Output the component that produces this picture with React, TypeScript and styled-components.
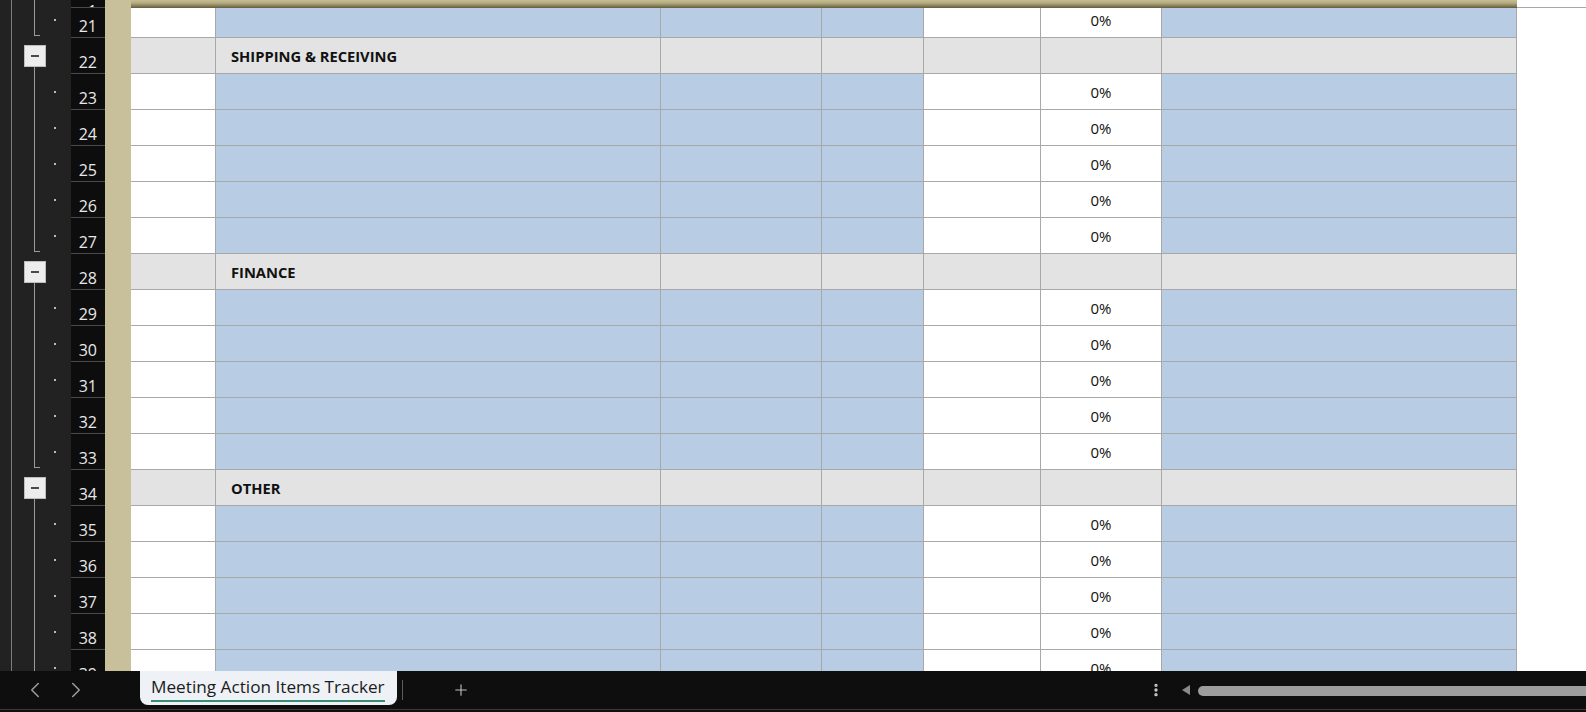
import React from 'react';
import styled, { createGlobalStyle } from 'styled-components';
import { ChevronLeft, ChevronRight, Plus, EllipsisVertical } from 'lucide-react';

const GlobalStyle = createGlobalStyle`
  html, body {
    margin: 0;
    padding: 0;
    background: #ffffff;
    overflow: hidden;
  }
  body {
    font-family: 'Open Sans', 'Noto Sans', sans-serif;
  }
`;

// widths of columns A..G
const COLS = [85, 445, 161, 102, 117, 121, 355];
const BLUE_COLS = [1, 2, 3, 6];
const GRID = '#a8a8a8';

type Outline = 'line' | 'end' | 'button';

interface IRow {
  num: number;
  group?: string;
  outline: Outline;
}

const rows: IRow[] = [
  { num: 21, outline: 'end' },
  { num: 22, outline: 'button', group: 'SHIPPING & RECEIVING' },
  { num: 23, outline: 'line' },
  { num: 24, outline: 'line' },
  { num: 25, outline: 'line' },
  { num: 26, outline: 'line' },
  { num: 27, outline: 'end' },
  { num: 28, outline: 'button', group: 'FINANCE' },
  { num: 29, outline: 'line' },
  { num: 30, outline: 'line' },
  { num: 31, outline: 'line' },
  { num: 32, outline: 'line' },
  { num: 33, outline: 'end' },
  { num: 34, outline: 'button', group: 'OTHER' },
  { num: 35, outline: 'line' },
  { num: 36, outline: 'line' },
  { num: 37, outline: 'line' },
  { num: 38, outline: 'line' },
  { num: 39, outline: 'line' },
];

const Page = styled.div`
  width: 1586px;
  height: 712px;
  display: flex;
  flex-direction: column;
  background: #ffffff;
`;

const Sheet = styled.div`
  height: 671px;
  overflow: hidden;
  display: flex;
  flex-direction: column;
`;

const Row = styled.div<{ $h: number; $pullUp?: boolean }>`
  display: flex;
  flex: none;
  height: ${({ $h }) => $h}px;
  margin-top: ${({ $pullUp }) => ($pullUp ? '-6px' : '0')};
`;

const FrozenRow = styled(Row)`
  position: relative;
  z-index: 2;
`;

const Gutter = styled.div`
  width: 71px;
  flex: none;
  display: flex;
  background: linear-gradient(#7c7c7c, #7c7c7c) 11px 0 / 1px 100% no-repeat, #222222;
`;

const Track = styled.div`
  width: 22px;
  margin-left: 24px;
  display: flex;
  flex-direction: column;
  align-items: flex-start;
`;

const VLine = styled.div`
  width: 1px;
  margin-left: 10px;
  flex: 1;
  background: #9a9a9a;
`;

const EndLine = styled.div`
  width: 5px;
  margin-left: 10px;
  height: calc(100% - 3px);
  border-left: 1px solid #9a9a9a;
  border-bottom: 1px solid #9a9a9a;
`;

const CollapseButton = styled.div`
  width: 22px;
  height: 22px;
  margin-top: 7px;
  box-sizing: border-box;
  background: #ededed;
  border: 1px solid #bdbdbd;
  display: flex;
  align-items: center;
  justify-content: center;
  flex: none;

  &::after {
    content: '';
    width: 8px;
    height: 2px;
    background: #4a4a4a;
  }
`;

const Dot = styled.div`
  width: 2px;
  height: 2px;
  margin-left: 8px;
  align-self: center;
  background: #bcbcbc;
`;

const RowHead = styled.div<{ $frozen?: boolean }>`
  width: 34px;
  flex: none;
  box-sizing: border-box;
  background: #0d0d0d;
  border-bottom: 1px solid #4a4a4a;
  color: #e8e8e8;
  font-size: 16px;
  line-height: 20px;
  display: flex;
  align-items: flex-end;
  justify-content: flex-end;
  padding-right: 8px;
  padding-bottom: ${({ $frozen }) => ($frozen ? '0' : '1px')};
  overflow: hidden;
`;

const FrozenNum = styled.span`
  margin-bottom: -14px;
`;

const Strip = styled.div`
  width: 26px;
  flex: none;
  background: #c8c09a;
`;

const FrozenShadow = styled.div`
  width: ${COLS.reduce((a, b) => a + b, 0)}px;
  flex: none;
  background: linear-gradient(to bottom, #c7be96 0%, #b2a97d 40%, #847e57 75%, #5e5a3c 100%);
`;

const Cell = styled.div<{ $w: number; $fill: string }>`
  width: ${({ $w }) => $w}px;
  flex: none;
  box-sizing: border-box;
  background: ${({ $fill }) => $fill};
  border-right: 1px solid ${GRID};
  border-bottom: 1px solid ${GRID};
  display: flex;
  align-items: center;
  color: #111111;
`;

const GroupLabel = styled.span`
  padding-left: 15px;
  font-size: 14.7px;
  font-weight: 700;
`;

const Percent = styled.span`
  width: 100%;
  text-align: center;
  font-size: 15px;
  padding-top: 1px;
`;

const Rest = styled.div<{ $line?: boolean }>`
  flex: 1;
  box-sizing: border-box;
  background: #ffffff;
  border-bottom: ${({ $line }) => ($line ? `1px solid ${GRID}` : 'none')};
`;

const TabBar = styled.div`
  height: 41px;
  flex: none;
  display: flex;
  align-items: flex-start;
  background: #0e0e0e;
  box-shadow: inset 0 -2px 0 #0e0e0e, inset 0 -3px 0 #3a3a3a;
`;

const NavArea = styled.div`
  width: 140px;
  height: 38px;
  flex: none;
  box-sizing: border-box;
  padding-left: 22px;
  display: flex;
  align-items: center;
  gap: 15px;
  color: #9c9c9c;
`;

const Tab = styled.div`
  width: 257px;
  height: 34px;
  flex: none;
  box-sizing: border-box;
  padding: 5px 0 0 11px;
  background: #eef1f5;
  border-radius: 0 0 8px 8px;
`;

const TabLabel = styled.span`
  display: inline-block;
  font-size: 17.2px;
  line-height: 22px;
  color: #1c1c1c;
  padding-bottom: 2px;
  border-bottom: 2px solid #3a8c72;
`;

const Separator = styled.div`
  width: 1px;
  height: 20px;
  margin: 9px 0 0 5px;
  background: #5c5c5c;
`;

const AddSheet = styled.div`
  margin: 10px 0 0 49px;
  color: #bdbdbd;
  display: flex;
`;

const ScrollArea = styled.div`
  width: 438px;
  height: 38px;
  margin-left: auto;
  display: flex;
  align-items: center;
  color: #cfcfcf;
`;

const ScrollArrow = styled.svg`
  margin-left: 18px;
  flex: none;
`;

const Thumb = styled.div`
  flex: 1;
  height: 10px;
  margin-left: 8px;
  margin-top: 2px;
  background: #9d9d9d;
  border-radius: 5px 0 0 5px;
`;

const GutterCell = ({ outline, data }: { outline: Outline; data: boolean }) => (
  <Gutter>
    <Track>
      {outline === 'line' && <VLine />}
      {outline === 'end' && <EndLine />}
      {outline === 'button' && (
        <>
          <CollapseButton />
          <VLine />
        </>
      )}
    </Track>
    {data && <Dot />}
  </Gutter>
);

const SheetRow = ({ row, index }: { row: IRow; index: number }) => {
  const isGroup = !!row.group;
  return (
    <Row $h={36} $pullUp={index === 0}>
      <GutterCell outline={row.outline} data={!isGroup} />
      <RowHead>{row.num}</RowHead>
      <Strip />
      {COLS.map((w, i) => {
        const fill = isGroup ? '#e3e3e3' : BLUE_COLS.includes(i) ? '#b8cce4' : '#ffffff';
        return (
          <Cell key={i} $w={w} $fill={fill}>
            {isGroup && i === 1 && <GroupLabel>{row.group}</GroupLabel>}
            {!isGroup && i === 5 && <Percent>0%</Percent>}
          </Cell>
        );
      })}
      <Rest />
    </Row>
  );
};

const App = () => {
  return (
    <Page>
      <GlobalStyle />
      <Sheet>
        <FrozenRow $h={8}>
          <GutterCell outline="line" data={false} />
          <RowHead $frozen>
            <FrozenNum>1</FrozenNum>
          </RowHead>
          <Strip />
          <FrozenShadow />
          <Rest $line />
        </FrozenRow>
        {rows.map((row, i) => (
          <SheetRow key={row.num} row={row} index={i} />
        ))}
      </Sheet>
      <TabBar>
        <NavArea>
          <ChevronLeft size={26} strokeWidth={1.4} />
          <ChevronRight size={26} strokeWidth={1.4} />
        </NavArea>
        <Tab>
          <TabLabel>Meeting Action Items Tracker</TabLabel>
        </Tab>
        <Separator />
        <AddSheet>
          <Plus size={18} strokeWidth={1.5} />
        </AddSheet>
        <ScrollArea>
          <EllipsisVertical size={16} strokeWidth={3} />
          <ScrollArrow width="8" height="10" viewBox="0 0 8 10">
            <path d="M8 0 L0 5 L8 10 Z" fill="#8a8a8a" />
          </ScrollArrow>
          <Thumb />
        </ScrollArea>
      </TabBar>
    </Page>
  );
};

export default App;
